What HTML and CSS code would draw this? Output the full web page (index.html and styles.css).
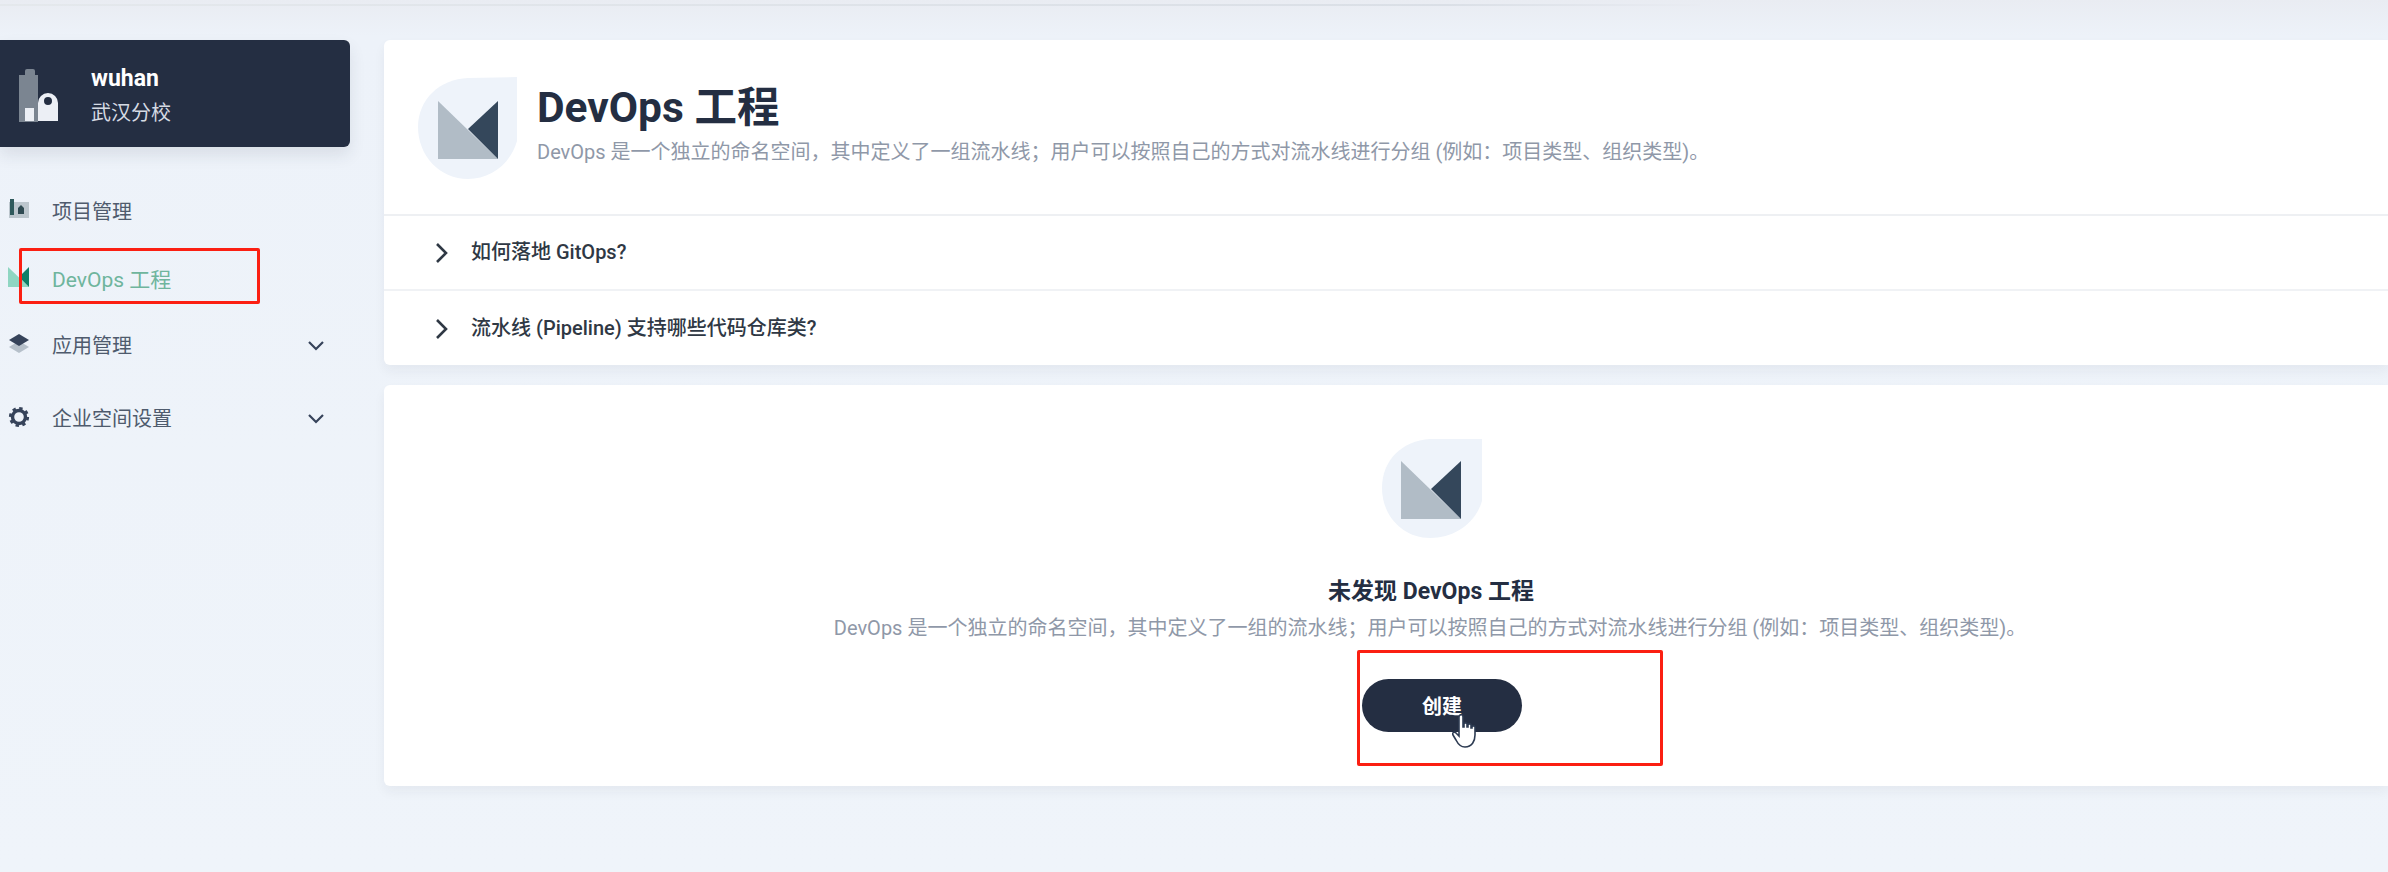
FILE: index.html
```html
<!DOCTYPE html>
<html lang="zh-CN">
<head>
<meta charset="utf-8">
<title>DevOps 工程</title>
<link rel="stylesheet" href="styles.css">
</head>
<body>
<div class="topline"></div>
<div class="layout">
  <aside class="sidebar">
    <div class="workspace">
      <svg class="ws-icon" width="40" height="58" viewBox="0 0 40 58"><path fill="#7b8591" d="M1 10h6V6a2 2 0 0 1 2-2h6a2 2 0 0 1 2 2v4h3v47H1z"/><rect x="7" y="43" width="9" height="13" fill="#eceff5"/><path fill="#eceff5" fill-rule="evenodd" d="M20 56V38a10 10 0 0 1 20 0v18zM30 32a4 4 0 1 0 0 8 4 4 0 0 0 0-8z"/></svg>
      <div class="ws-text">
        <div class="ws-name">wuhan</div>
        <div class="ws-sub">武汉分校</div>
      </div>
    </div>
    <nav class="nav">
      <a class="nav-item">
        <svg class="nav-icon" width="22" height="22" viewBox="0 0 22 22"><rect x="1" y="3" width="20" height="16" fill="#bcc6cd"/><rect x="2" y="0" width="4" height="16" fill="#2f5a5c"/><path fill="#2f4a52" d="M10 15V9l3-3 3 3v6z"/></svg>
        <span>项目管理</span>
      </a>
      <a class="nav-item active">
        <svg class="nav-icon" width="22" height="22" viewBox="0 0 22 22"><path fill="#8fd6c2" d="M0 1l21 20H0z"/><path fill="#0f7f68" d="M21 1v20L11 11z"/></svg>
        <span>DevOps 工程</span>
      </a>
      <a class="nav-item">
        <svg class="nav-icon" width="22" height="22" viewBox="0 0 22 22"><path fill="#b6c0ca" d="M11 8l10 6-10 6-10-6z"/><path fill="#36435a" d="M11 1l10 6-10 6L1 7z"/></svg>
        <span>应用管理</span>
        <svg class="caret" width="18" height="12" viewBox="0 0 18 12"><path d="M2 2l7 7 7-7" fill="none" stroke="#36435a" stroke-width="2.2"/></svg>
      </a>
      <a class="nav-item spaced">
        <svg class="nav-icon" width="22" height="22" viewBox="0 0 22 22"><circle cx="11" cy="11" r="6.500" fill="none" stroke="#36435a" stroke-width="3.400"/><circle cx="11" cy="11" r="8.800" fill="none" stroke="#36435a" stroke-width="2.600" stroke-dasharray="3.400 3.500"/></svg>
        <span>企业空间设置</span>
        <svg class="caret" width="18" height="12" viewBox="0 0 18 12"><path d="M2 2l7 7 7-7" fill="none" stroke="#36435a" stroke-width="2.2"/></svg>
      </a>
    </nav>
  </aside>
  <main class="main">
    <section class="card head-card">
      <header class="page-head">
        <svg class="logo" width="100" height="102" viewBox="0 0 100 102"><path fill="#eef3fa" d="M99 0v64C92 88 72 102 50 102 22 102 0 79 0 50 0 22 22 2 50 1z"/><path fill="#b1bcc6" d="M20 24l60 58H20z"/><path fill="#34475b" d="M80 24v58L50 52z"/></svg>
        <div class="head-text">
          <h1>DevOps 工程</h1>
          <p>DevOps 是一个独立的命名空间，其中定义了一组流水线；用户可以按照自己的方式对流水线进行分组 (例如：项目类型、组织类型)。</p>
        </div>
      </header>
      <div class="faq">
        <svg width="14" height="22" viewBox="0 0 14 22"><path d="M2 2l9 9-9 9" fill="none" stroke="#2f3844" stroke-width="2.6"/></svg>
        <span>如何落地 GitOps?</span>
      </div>
      <div class="faq">
        <svg width="14" height="22" viewBox="0 0 14 22"><path d="M2 2l9 9-9 9" fill="none" stroke="#2f3844" stroke-width="2.6"/></svg>
        <span>流水线 (Pipeline) 支持哪些代码仓库类?</span>
      </div>
    </section>
    <section class="card empty-card">
      <svg class="logo" width="100" height="100" viewBox="0 0 100 100"><path fill="#eef3fa" d="M100 1v62C93 86 72 100 48 100 21 100 0 78 0 50 0 22 20 3 48 1z"/><path fill="#b1bcc6" d="M19 23l60 58H19z"/><path fill="#34475b" d="M79 23v58L49 51z"/></svg>
      <h2>未发现 DevOps 工程</h2>
      <p>DevOps 是一个独立的命名空间，其中定义了一组的流水线；用户可以按照自己的方式对流水线进行分组 (例如：项目类型、组织类型)。</p>
      <button class="create">创建</button>
    </section>
  </main>
</div>
<div class="mark mark-nav"></div>
<div class="mark mark-btn"></div>
<svg class="cursor" width="26" height="36" viewBox="0 0 26 36"><path fill="#fff" stroke="#2d3b52" stroke-width="1.600" d="M8 2c1.400-1 3 0 3 2v10l1 0v-3c0-1.500 3-1.500 3 0v3h1v-2c0-1.500 3-1.500 3 0v3h1v-1c0-1.500 3-1.500 3 0v8c0 6-3 12-10 12-5 0-7-3-9-7l-3-5c-1-2 1-4 3-2l3 3V4c0-1 .5-1.500 1-2z"/></svg>
</body>
</html>
```
FILE: styles.css
```css
* { box-sizing: border-box; }
html, body { margin: 0; height: 100%; }
body {
  position: relative;
  height: 872px;
  overflow: hidden;
  background: linear-gradient(#e9ecf2 0, #edf2f9 36px, #eff4fa 100%);
  font-family: Roboto, "Noto Sans CJK SC", sans-serif;
  color: #36435a;
}
.topline {
  height: 2px;
  width: 1700px;
  margin-top: 4px;
  background: linear-gradient(90deg, #e4e8ec, #dadfe6 85%, #e9ecf2);
}
.layout {
  display: flex;
  gap: 34px;
  padding-top: 34px;
}
.sidebar { width: 350px; flex: none; }
.workspace {
  height: 107px;
  display: flex;
  align-items: center;
  padding-left: 18px;
  background: #242e42;
  border-radius: 0 6px 6px 0;
  box-shadow: 0 8px 16px rgba(36, 46, 66, .1);
}
.ws-icon { margin-right: 33px; }
.ws-text { padding-top: 4px; }
.ws-name { font-size: 23px; line-height: 28px; font-weight: 700; color: #fff; }
.ws-sub { font-size: 20px; line-height: 28px; margin-top: 6px; color: #d5dae3; }
.nav { padding-top: 30px; }
.nav-item {
  display: flex;
  align-items: center;
  height: 67px;
  padding-left: 8px;
  font-size: 20px;
  color: #4f5b6d;
}
.nav-item.spaced { margin-top: 6px; }
.nav-icon { flex: none; margin-right: 22px; margin-top: -2px; }
.nav-item.active { color: #6fb59d; font-size: 21px; }
.caret { margin-left: auto; margin-right: 25px; margin-top: 2px; }
.main { flex: 1; min-width: 0; display: flex; flex-direction: column; gap: 20px; }
.card {
  background: #fff;
  border-radius: 6px 0 0 6px;
  box-shadow: 0 6px 12px rgba(36, 46, 66, .05);
}
.head-card { height: 325px; }
.page-head {
  height: 176px;
  display: flex;
  align-items: flex-start;
  padding: 37px 0 0 34px;
  border-bottom: 2px solid #eef0f3;
}
.logo { flex: none; display: block; }
.head-text { margin-left: 19px; padding-top: 3px; }
h1 {
  margin: 0;
  font-size: 42.5px;
  line-height: 56px;
  font-weight: 700;
  color: #242e42;
}
.head-text p {
  margin: 2px 0 0;
  font-size: 20px;
  line-height: 28px;
  color: #8f98a8;
  white-space: nowrap;
}
.faq {
  height: 75px;
  display: flex;
  align-items: center;
  padding-left: 51px;
  gap: 22px;
  font-size: 20px;
  font-weight: 500;
  color: #2f3844;
  border-bottom: 2px solid #f0f2f5;
}
.faq:last-child { border-bottom: 0; }
.faq span { margin-top: -4px; }
.empty-card {
  height: 401px;
  display: flex;
  flex-direction: column;
  align-items: center;
  padding: 53px 0 0 88px;
}
.empty-card .logo { margin-left: 4px; }
h2 {
  margin: 37px 0 0 2px;
  font-size: 23px;
  line-height: 34px;
  font-weight: 700;
  color: #242e42;
}
.empty-card p {
  margin: 4px 0 0;
  font-size: 20px;
  line-height: 30px;
  color: #8f98a8;
  white-space: nowrap;
}
.create {
  margin: 36px 0 0 24px;
  width: 160px;
  height: 53px;
  border: 0;
  border-radius: 27px;
  background: #242e42;
  color: #fff;
  font: 700 20px Roboto, "Noto Sans CJK SC", sans-serif;
}
.mark {
  position: absolute;
  border: 3px solid #fb1f12;
  border-radius: 2px;
}
.mark-nav { left: 19px; top: 248px; width: 241px; height: 56px; }
.mark-btn { left: 1357px; top: 650px; width: 306px; height: 116px; }
.cursor { position: absolute; left: 1452px; top: 713px; }
```
